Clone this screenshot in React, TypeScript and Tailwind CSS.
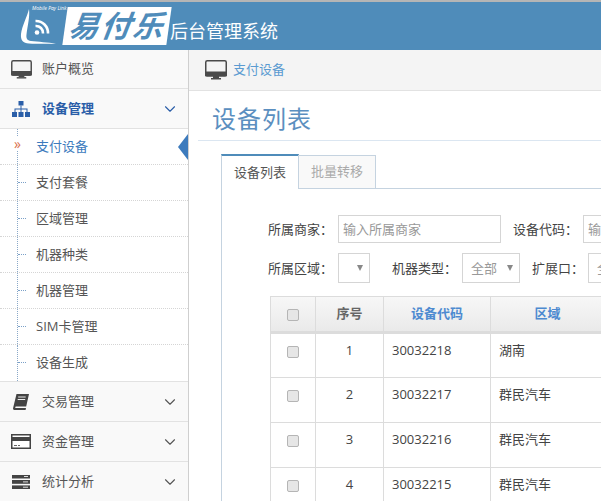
import { ChevronDown } from "lucide-react";

const font = "font-['Open_Sans','Noto_Sans_CJK_SC',sans-serif]";

function Monitor({ className }: { className?: string }) {
  return (
    <svg viewBox="0 0 22 20" className={className}>
      <rect x="0.75" y="0.75" width="20.5" height="15" rx="1.5" fill="#f4f4f4" stroke="#4a4a4a" strokeWidth="1.5" />
      <rect x="0" y="11.5" width="22" height="5" rx="1" fill="#4a4a4a" />
      <rect x="8" y="16" width="6" height="2" fill="#4a4a4a" />
      <rect x="6" y="18" width="10" height="1.5" fill="#4a4a4a" />
    </svg>
  );
}

function Sitemap() {
  return (
    <svg viewBox="0 0 18 16" className="w-[18px] h-[16px]" fill="#2a5ea8">
      <rect x="6.5" y="0" width="5" height="4.5" />
      <rect x="0" y="11" width="5" height="5" />
      <rect x="6.5" y="11" width="5" height="5" />
      <rect x="13" y="11" width="5" height="5" />
      <path d="M8.5 4.5h1V7.5h6V11h-1V8.5h-5V11h-1V8.5h-5V11h-1V7.5h6z" />
    </svg>
  );
}

function BookIcon() {
  return (
    <svg viewBox="0 0 16 16" className="w-[16px] h-[16px]" fill="#444">
      <path d="M3.5 0H16l-2.8 12.5H3c-.8 0-1.1 1.5-.2 1.5H13l-.4 2H1.2C.2 16-.1 15 .1 14z" />
      <path d="M5.2 3h7.5M4.7 5.5h7.5" stroke="#fff" strokeWidth="0.9" />
    </svg>
  );
}

function CardIcon() {
  return (
    <svg viewBox="0 0 20 15" className="w-[20px] h-[15px]">
      <rect x="0.75" y="0.75" width="18.5" height="13.5" fill="#fff" stroke="#444" strokeWidth="1.5" />
      <rect x="0" y="3" width="20" height="4" fill="#444" />
      <rect x="3" y="11" width="3" height="1" fill="#666" />
      <rect x="7" y="11" width="2" height="1" fill="#666" />
    </svg>
  );
}

function ServerIcon() {
  return (
    <svg viewBox="0 0 18 14" className="w-[18px] h-[14px]" fill="#444">
      <rect width="18" height="3.5" />
      <rect y="5" width="18" height="3.8" />
      <rect y="10.4" width="18" height="3.6" />
      <rect x="12" y="1" width="4" height="1" fill="#ddd" />
      <rect x="11" y="6.4" width="5" height="1" fill="#ddd" />
      <rect x="11" y="11.7" width="5" height="1" fill="#ddd" />
    </svg>
  );
}

// L-shaped bubble with the wifi waves inside
function WifiLogo() {
  return (
    <svg viewBox="0 0 40 40" className="w-[40px] h-[40px] shrink-0">
      <path d="M9 3C7 11 2 20 1 28c-.6 6 2 9.500 8 9.500 8 .5 18 0 27 .5-8-2-18-2-25-3-4-.5-5-3-4.500-6.500C7.500 20 10 11 9 3z" fill="#fff" />
      <circle cx="17" cy="26.500" r="2.300" fill="#fff" />
      <path d="M15.500 20a7 7 0 0 1 7.500 7.500M15.500 15a12 12 0 0 1 12.500 12.500" fill="none" stroke="#fff" strokeWidth="2.600" />
    </svg>
  );
}

function Logo() {
  return (
    <div className="relative flex items-center pl-[20px] h-full">
      <WifiLogo />
      <span className="absolute left-[32px] top-[2px] text-[5px] leading-[8px] italic text-white whitespace-nowrap">Mobile Pay Link</span>
      <div className="ml-[5px] w-[104px] h-[38px] bg-white -skew-x-[8deg] flex items-center justify-center">
        <span className="text-[30px] leading-none font-bold italic text-[#4f8cba] tracking-[2px] whitespace-nowrap">易付乐</span>
      </div>
      <span className="ml-[1px] mt-[10px] text-[18px] text-white whitespace-nowrap">后台管理系统</span>
    </div>
  );
}

function NavHead({ icon, label, active }: { icon: React.ReactNode; label: string; active?: boolean }) {
  return (
    <div className="h-[40px] flex items-center bg-[#f9f9f9] border-b border-[#e2e2e2]">
      <div className="w-[42px] flex justify-center">{icon}</div>
      <span className={`text-[13px] ${active ? "font-bold text-[#2a5ea8]" : "text-[#555]"}`}>{label}</span>
      <ChevronDown size={18} strokeWidth={1.5} className={`ml-auto mr-[9px] ${active ? "text-[#2a5ea8]" : "text-[#555]"}`} />
    </div>
  );
}

const subItems = ["支付设备", "支付套餐", "区域管理", "机器种类", "机器管理", "SIM卡管理", "设备生成"];

function SubNav() {
  return (
    <div className="bg-white border-b border-[#e2e2e2]">
      {subItems.map((item, i) => (
        <div key={item} className="relative h-[36px] flex items-center pl-[36px] border-b border-dotted border-[#d5d5d5] last:border-b-0">
          <span className="absolute left-[17px] top-0 bottom-0 border-l border-dotted border-[#8aa8c8]" />
          {i === 0 ? (
            <span className="absolute left-[14px] top-[8px] text-[14px] leading-none text-[#d9704a] bg-white">»</span>
          ) : (
            <span className="absolute left-[18px] top-[17px] w-[8px] border-t border-dotted border-[#7aa0c8]" />
          )}
          <span className={`text-[13px] ${i === 0 ? "text-[#3d7bbd]" : "text-[#555]"}`}>{item}</span>
          {i === 0 && (
            <span className="absolute right-0 top-[5px] w-0 h-0 border-y-[13px] border-y-transparent border-r-[10px] border-r-[#3d7bbd]" />
          )}
        </div>
      ))}
    </div>
  );
}

function Sidebar() {
  return (
    <aside className="w-[189px] shrink-0 border-r border-[#cfcfcf] bg-[#f9f9f9] overflow-hidden">
      <div className="h-[39px] flex items-center bg-[#f9f9f9] border-b border-[#e2e2e2]">
        <div className="w-[42px] flex justify-center"><Monitor className="w-[21px] h-[19px]" /></div>
        <span className="text-[13px] text-[#555]">账户概览</span>
      </div>
      <NavHead icon={<Sitemap />} label="设备管理" active />
      <SubNav />
      <NavHead icon={<BookIcon />} label="交易管理" />
      <NavHead icon={<CardIcon />} label="资金管理" />
      <NavHead icon={<ServerIcon />} label="统计分析" />
    </aside>
  );
}

function Checkbox() {
  return <span className="inline-block align-middle w-[12px] h-[12px] rounded-[2px] bg-[#e6e6e6] border border-[#b5b5b5]" />;
}

function Select({ value, width }: { value?: string; width: string }) {
  return (
    <div className={`${width} h-[30px] shrink-0 border border-[#d5d5d5] flex items-center pl-[8px] text-[13px] text-[#999] bg-white`}>
      <span className="whitespace-nowrap pt-[2px]">{value}</span>
      <span className="ml-auto mr-[6px] w-0 h-0 border-x-[3.5px] border-x-transparent border-t-[6px] border-t-[#888]" />
    </div>
  );
}

function FilterForm() {
  return (
    <div className="pl-[46px] pt-[26px] text-[13px] text-[#444]">
      <div className="flex items-center h-[28px] w-[500px]">
        <span className="w-[70px] shrink-0 pt-[2px]">所属商家：</span>
        <div className="w-[163px] h-[28px] shrink-0 border border-[#d5d5d5] pl-[4px] pt-[2px] flex items-center text-[#999]">输入所属商家</div>
        <span className="ml-[12px] w-[70px] shrink-0 pt-[2px]">设备代码：</span>
        <div className="w-[163px] h-[28px] shrink-0 border border-[#d5d5d5] pl-[4px] pt-[2px] flex items-center text-[#999]">输入设备代码</div>
      </div>
      <div className="flex items-center h-[30px] mt-[10px] w-[500px]">
        <span className="w-[70px] shrink-0 pt-[2px]">所属区域：</span>
        <Select width="w-[32px]" />
        <span className="ml-[22px] w-[70px] shrink-0 pt-[2px]">机器类型：</span>
        <Select value="全部" width="w-[58px]" />
        <span className="ml-[12px] w-[56px] shrink-0 pt-[2px]">扩展口：</span>
        <Select value="全部" width="w-[58px]" />
      </div>
    </div>
  );
}

const rows = [
  { no: 1, code: "30032218", area: "湖南" },
  { no: 2, code: "30032217", area: "群民汽车" },
  { no: 3, code: "30032216", area: "群民汽车" },
  { no: 4, code: "30032215", area: "群民汽车" },
];

function DeviceTable() {
  return (
    <table className="ml-[48px] mt-[13px] border-collapse table-fixed w-[334px] text-[13px] text-[#444]">
      <colgroup>
        <col className="w-[45px]" />
        <col className="w-[68px]" />
        <col className="w-[107px]" />
        <col className="w-[114px]" />
      </colgroup>
      <thead>
        <tr className="h-[36px] bg-gradient-to-b from-[#f7f7f7] to-[#e9e9e9]">
          <th className="border border-[#dcdcdc] border-b-[3px] font-normal"><Checkbox /></th>
          <th className="border border-[#dcdcdc] border-b-[3px] font-bold text-[#666]">序号</th>
          <th className="border border-[#dcdcdc] border-b-[3px] font-bold text-[#4d8ad0]">设备代码</th>
          <th className="border border-[#dcdcdc] border-b-[3px] font-bold text-[#4d8ad0]">区域</th>
        </tr>
      </thead>
      <tbody>
        {rows.map((r) => (
          <tr key={r.no} className="h-[45px]">
            <td className="border border-[#dcdcdc] text-center align-top pt-[7px]"><Checkbox /></td>
            <td className="border border-[#dcdcdc] text-center align-top pt-[7px]">{r.no}</td>
            <td className="border border-[#dcdcdc] pl-[8px] align-top pt-[7px]">{r.code}</td>
            <td className="border border-[#dcdcdc] pl-[8px] align-top pt-[7px]">{r.area}</td>
          </tr>
        ))}
      </tbody>
    </table>
  );
}

function Main() {
  return (
    <main className="flex-1 min-w-0 overflow-hidden bg-white">
      <div className="h-[41px] bg-[#f4f4f4] border-b border-[#e2e2e2] flex items-center pl-[16px] gap-[6px]">
        <Monitor className="w-[22px] h-[20px]" />
        <span className="text-[13px] text-[#5b9bd1]">支付设备</span>
      </div>
      <div className="ml-[9px] h-[50px] border-b border-[#dbe6f1] pl-[14px] pt-[7px] flex items-center">
        <h1 className="text-[24px] font-normal text-[#5b8fc0] tracking-[1px]">设备列表</h1>
      </div>
      <div className="ml-[32px] mt-[13px] h-[35px] flex items-end border-b border-[#c5d3e0]">
        <div className="w-[78px] h-[35px] -mb-[1px] bg-white border-t-[2px] border-t-[#4f8cba] border-x border-x-[#c5d3e0] flex items-center justify-center text-[13px] text-[#555]">设备列表</div>
        <div className="w-[78px] h-[34px] -mb-[1px] -ml-[1px] bg-[#f9f9f9] border border-[#c5d3e0] flex items-center justify-center text-[13px] text-[#aaa]">批量转移</div>
      </div>
      <div className="ml-[32px] w-[600px] h-full border-l border-[#c5d3e0]">
        <FilterForm />
        <DeviceTable />
      </div>
    </main>
  );
}

export default function App() {
  return (
    <div className={`${font} w-[601px] h-[501px] overflow-hidden flex flex-col bg-white`}>
      <header className="h-[50px] shrink-0 bg-[#4f8cba] border-t-2 border-t-[#b5b5b5]">
        <Logo />
      </header>
      <div className="flex flex-1 min-h-0">
        <Sidebar />
        <Main />
      </div>
    </div>
  );
}
